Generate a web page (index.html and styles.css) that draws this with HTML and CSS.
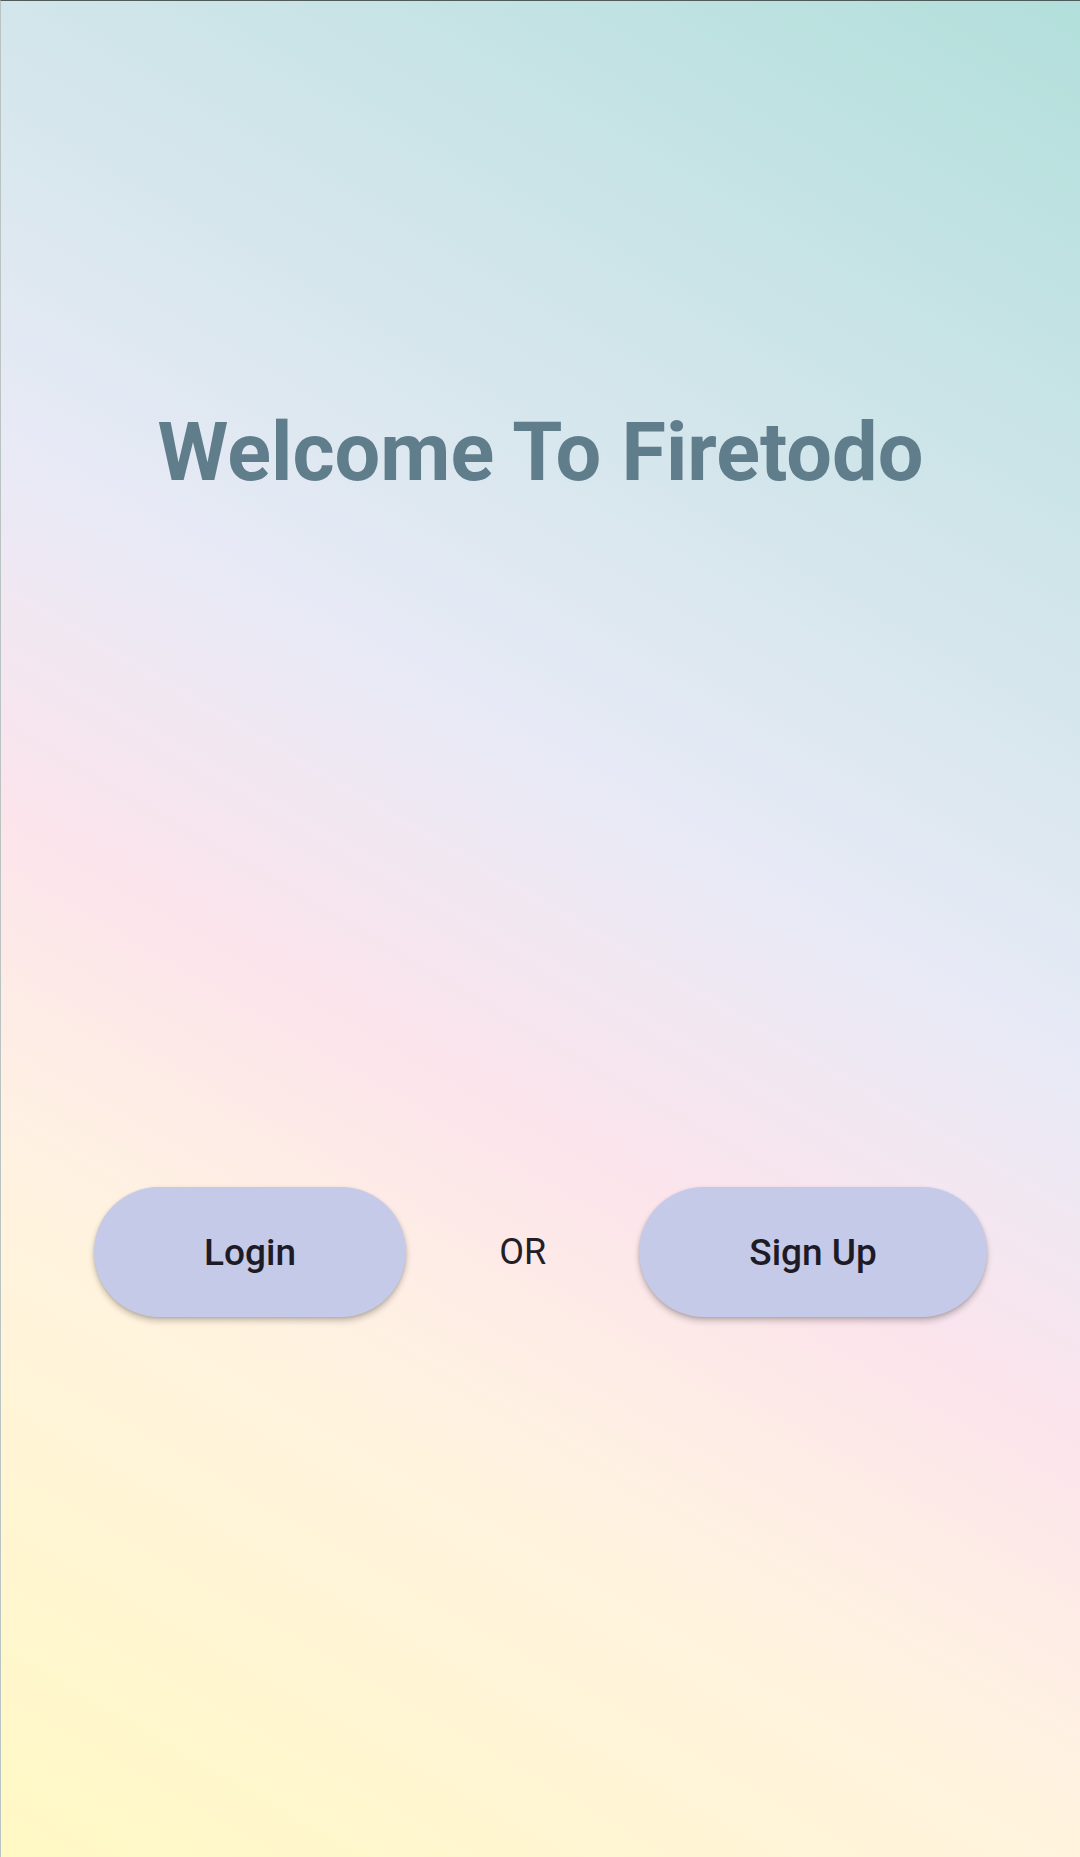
FILE: index.html
```html
<!DOCTYPE html>
<html>
<head>
<meta charset="utf-8">
<link rel="stylesheet" href="styles.css">
</head>
<body>
<div class="screen">
  <h1 class="title">Welcome To Firetodo</h1>
  <div class="actions">
    <button class="pill">Login</button>
    <span class="or">OR</span>
    <button class="pill">Sign Up</button>
  </div>
</div>
</body>
</html>
```
FILE: styles.css
```css
html, body {
  margin: 0;
  padding: 0;
}
body {
  font-family: Roboto, "Noto Sans", sans-serif;
}
.screen {
  box-sizing: border-box;
  width: 1080px;
  height: 1857px;
  border-top: 1px solid #4f5b5b;
  border-left: 1px solid #b9c4c2;
  background: linear-gradient(210.17deg,
    #B2DFDB 0%,
    #E8EAF6 43%,
    #FCE4EC 58%,
    #FFF3E0 72.5%,
    #FFF9C4 100%);
  display: flex;
  flex-direction: column;
  align-items: center;
}
.title {
  margin: 402px 0 0 0;
  font-size: 81px;
  font-weight: 700;
  line-height: 100px;
  color: #607D8B;
  letter-spacing: 0;
}
.actions {
  margin-top: 684px;
  width: 100%;
  display: flex;
  justify-content: space-evenly;
  align-items: center;
}
.pill {
  height: 130px;
  padding: 0 110px;
  border: none;
  border-radius: 65px;
  background: #C5CAE9;
  color: #1d1b26;
  font-family: Roboto, sans-serif;
  font-size: 37px;
  font-weight: 500;
  box-shadow: 0 4px 6px rgba(0, 0, 0, 0.22), 0 1px 3px rgba(0, 0, 0, 0.12);
}
.or {
  font-size: 36px;
  color: #222026;
}
```
